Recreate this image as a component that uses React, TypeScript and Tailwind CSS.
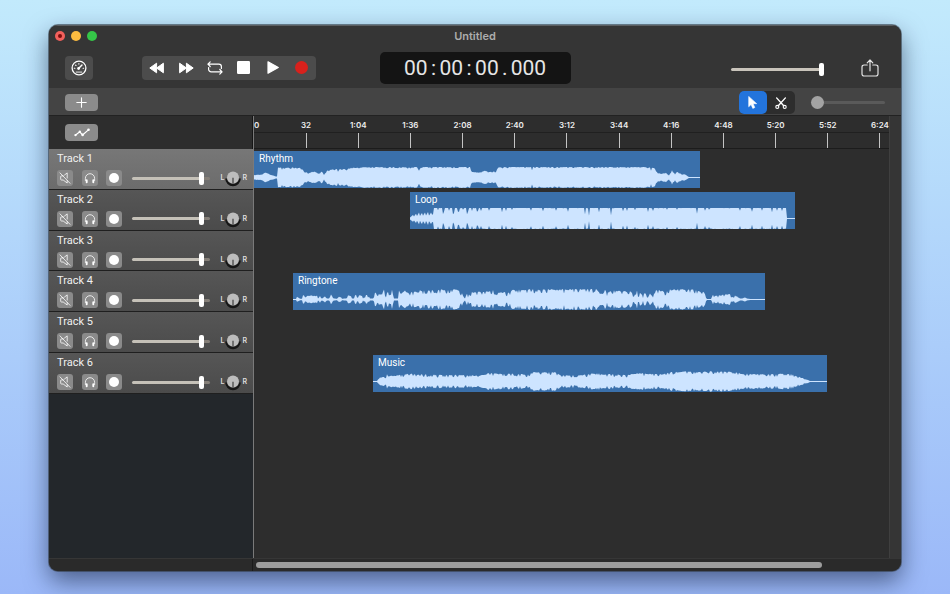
import React, { useState } from "react";
import clsx from "clsx";

/* ---------- data ---------- */

type Key = [x: number, amp: number];

interface Clip {
  name: string;
  start: number;
  length: number;
  jitter: number;
  keys: Key[];
  dips?: Key[];
}

const rhythm: Clip = {
  name: "Rhythm",
  start: 0,
  length: 446,
  jitter: 1.4,
  keys: [
    [0, 2.5], [8, 3], [12, 5.5], [16, 3], [22, 1], [23, 1], [24, 10], [46, 10], [51, 6], [54, 4.5], [59, 6.5], [64, 4.5],
    [68, 6], [70, 3], [73, 7], [79, 8.5], [93, 8.5], [96, 9.8], [116, 10.5], [163, 10.5], [165, 7], [167, 10.6],
    [216, 10.6], [218, 5.5], [226, 5.5], [231, 7], [236, 5.5], [242, 6.5], [244, 10.4], [260, 10.6], [393, 10.6], [401, 9.5],
    [403, 5.5], [407, 3.5], [412, 5], [415, 2], [418, 7.5], [421, 3.5], [423, 6], [428, 3], [431, 3.5], [434, 1], [435, 0.5],
    [446, 0.5],
  ],
  dips: [[28, 1], [37, 1], [66, 1], [84, 2], [88, 1], [278, 3], [305, 1], [397, 2]],
};

const loop: Clip = {
  name: "Loop",
  start: 156,
  length: 385,
  jitter: 0.6,
  keys: [
    [0, 1], [3, 3.5], [4, 2], [6, 5], [7, 2.5], [9, 6], [10, 2.5], [12, 6], [13, 3], [15, 6], [16, 3], [18, 6.5], [19, 3],
    [21, 6], [22, 4], [23, 4], [24, 10.8], [376, 10.8], [377, 0.5], [385, 0.5],
  ],
  dips: [
    [28, 2], [33, 6], [34, 4], [39, 3], [43, 6], [44, 5], [48, 4], [49, 4], [53, 2], [57, 6], [58, 4], [62, 3], [67, 4],
    [68, 3], [71, 3], [79, 3], [92, 4], [96, 3], [102, 2], [121, 3], [133, 3], [146, 3], [158, 4], [175, 6], [179, 8],
    [189, 4], [201, 7], [213, 3], [217, 3], [225, 2], [238, 4], [243, 3], [257, 2], [267, 2], [287, 6], [295, 3],
    [299, 2], [330, 3], [342, 4], [352, 3], [362, 4], [367, 3], [372, 3],
  ],
};

const ringtone: Clip = {
  name: "Ringtone",
  start: 39,
  length: 472,
  jitter: 4.5,
  keys: [
    [0, 0.5], [3, 0.5], [4, 3], [7, 0.8], [9, 0.8], [10, 4.5], [13, 4], [24, 4], [25, 1], [27, 3.5], [29, 1], [31, 4.5],
    [34, 1], [36, 1], [38, 5], [41, 1], [44, 0.8], [47, 4.5], [49, 0.8], [53, 1], [55, 6.5], [57, 6.5], [59, 1], [61, 1],
    [62, 5], [69, 4], [70, 1], [73, 5], [75, 5], [77, 1], [80, 1], [82, 7], [87, 5.5], [89, 5.5], [91, 10.5], [93, 5],
    [95, 9], [97, 5], [99, 10], [101, 1], [105, 1], [106, 10.5], [108, 6], [112, 9], [116, 7], [120, 8.5], [125, 7.5],
    [127, 9.5], [139, 9.5], [145, 10.4], [164, 10.4], [169, 7], [171, 2], [172, 1], [174, 7], [175, 2], [177, 8],
    [182, 7.5], [200, 9.5], [205, 7.5], [217, 7.5], [220, 10.4], [247, 10.4], [270, 10.4], [277, 11], [304, 10.8],
    [307, 7], [310, 6], [312, 10], [314, 7.5], [319, 9.5], [337, 8.5], [342, 6], [344, 10.5], [345, 3], [347, 7.5],
    [350, 4], [352, 7.5], [355, 2], [357, 6.5], [360, 4], [362, 10], [370, 9.5], [372, 7], [377, 10.4], [394, 11],
    [404, 10.2], [407, 8], [409, 6], [411, 10], [413, 3], [414, 0.5], [418, 0.5], [419, 6], [421, 4.5], [427, 4.5],
    [431, 5.5], [435, 6], [440, 4.5], [444, 3.5], [447, 1], [449, 1], [452, 2], [454, 1], [457, 0.6], [472, 0.6],
  ],
};

const music: Clip = {
  name: "Music",
  start: 119,
  length: 454,
  jitter: 3,
  keys: [
    [0, 0.5], [4, 0.5], [6, 4], [13, 5], [14, 8], [15, 5.5], [25, 6.5], [35, 8], [59, 7], [82, 6.8], [102, 6.4], [112, 6.8],
    [115, 9], [125, 8], [135, 8.2], [155, 7.5], [159, 9.5], [182, 9.5], [187, 6.6], [209, 6.6], [225, 9], [230, 7.5],
    [244, 7.5], [254, 6.6], [264, 8.6], [290, 7.6], [297, 9.5], [314, 10.5], [324, 9.5], [337, 10.5], [360, 10],
    [370, 8], [390, 7.6], [419, 8], [424, 5.5], [430, 3.5], [437, 0.6], [454, 0.6],
  ],
};

const tracks: { name: string; clip?: Clip }[] = [
  { name: "Track 1", clip: rhythm },
  { name: "Track 2", clip: loop },
  { name: "Track 3" },
  { name: "Track 4", clip: ringtone },
  { name: "Track 5" },
  { name: "Track 6", clip: music },
];

const marks = ["32", "1:04", "1:36", "2:08", "2:40", "3:12", "3:44", "4:16", "4:48", "5:20", "5:52", "6:24"];

/* ---------- wave form ---------- */

// Integer hash, 0..1.
function noise(n: number) {
  let v = Math.imul(n + 1013, 0x9e3779b1);
  v = Math.imul(v ^ (v >>> 15), 0x85ebca6b);
  v ^= v >>> 13;
  return (v >>> 0) / 4294967296;
}

// Mostly a shallow ripple, with a deep notch every few pixels.
function roughness(x: number) {
  return noise(x) > 0.72 ? 0.6 + noise(x + 311) * 0.4 : noise(x + 97) * 0.35;
}

function wavePath({ length, keys, dips = [], jitter }: Clip) {
  const mid = 10.5;
  const top: string[] = [];
  const bottom: string[] = [];
  let k = 0;
  for (let x = 0; x <= length; x++) {
    while (k < keys.length - 2 && x > keys[k + 1][0]) k++;
    const [x0, a0] = keys[k];
    const [x1, a1] = keys[k + 1];
    let amp = a0 + ((a1 - a0) * (x - x0)) / (x1 - x0);
    if (amp > 2) amp = Math.max(1.5, amp - jitter * roughness(x) * Math.min(1, amp / 7));
    const dip = dips.find(([at]) => at === x);
    if (dip) amp -= dip[1];
    top.push(`${x} ${(mid - amp).toFixed(2)}`);
    bottom.unshift(`${x} ${(mid + amp - (amp > 2 ? noise(x + 900) * 0.4 : 0)).toFixed(2)}`);
  }
  return `M${top.join("L")}L${bottom.join("L")}Z`;
}

function ClipView({ clip }: { clip: Clip }) {
  return (
    <div
      className="flex h-[37px] shrink-0 flex-col justify-between bg-[#3a70ab]"
      style={{ width: clip.length, marginLeft: clip.start }}
    >
      <span className="h-4 px-[5px] font-['Roboto','Inter',sans-serif] text-[10px] leading-4 text-white">{clip.name}</span>
      <svg className="block h-[21px] w-full" viewBox={`0 0 ${clip.length} 21`} preserveAspectRatio="none" aria-hidden="true">
        <path d={wavePath(clip)} fill="#cde4ff" />
      </svg>
    </div>
  );
}

/* ---------- icons ---------- */

type IconProps = { className?: string };

const Gauge = () => (
  <svg className="size-4" viewBox="0 0 16 16" fill="none" stroke="#fff" aria-hidden="true">
    <circle cx="8" cy="8" r="6.9" strokeWidth="1.3" />
    <path d="M7.8 8.3 11 4.9" strokeWidth="1.4" strokeLinecap="round" />
    <circle cx="7.6" cy="8.5" r="1.4" fill="#fff" stroke="none" />
    <path d="M3.3 8.2h.6M4.6 5.1l.4.4M7.9 3.5v.6M12.1 8.2h.5" strokeWidth="1.1" strokeLinecap="round" />
    <path d="M4.8 12.1h6.4" strokeWidth=".9" />
  </svg>
);

const Rewind = ({ className }: IconProps) => (
  <svg className={clsx("h-3 w-4", className)} viewBox="0 0 16 12" fill="#fff" stroke="#fff" strokeWidth="1" strokeLinejoin="round" aria-hidden="true">
    <path d="M7.6 1.2v9.6L.8 6ZM14.4 1.2v9.6L7.6 6Z" />
  </svg>
);

const Repeat = () => (
  <svg className="h-[14px] w-4" viewBox="0 0 16 14" fill="none" stroke="#fff" strokeWidth="1.2" strokeLinecap="round" strokeLinejoin="round" aria-hidden="true">
    <path d="M3.2.9.9 3.2l2.3 2.3M1.2 3.2h10.6a2.6 2.6 0 0 1 2.6 2.6v1.6" />
    <path d="m12.8 8.5 2.3 2.3-2.3 2.3M14.8 10.8H4.2a2.6 2.6 0 0 1-2.6-2.6V6.6" />
  </svg>
);

const Stop = () => (
  <svg className="size-[13px]" viewBox="0 0 13 13" aria-hidden="true">
    <rect width="13" height="13" rx="1.2" fill="#fff" />
  </svg>
);

const Play = () => (
  <svg className="h-[13px] w-3" viewBox="0 0 12 13" fill="#fff" stroke="#fff" strokeWidth="1.2" strokeLinejoin="round" aria-hidden="true">
    <path d="M1 .8v11.4L11.3 6.5Z" />
  </svg>
);

const Share = () => (
  <svg className="h-[18px] w-[18px]" viewBox="0 0 18 18" fill="none" stroke="#e4e4e4" strokeWidth="1.2" strokeLinecap="round" strokeLinejoin="round" aria-hidden="true">
    <path d="M6.2 6H3.1A2 2 0 0 0 1 8v7a2 2 0 0 0 2.1 2h11.8a2 2 0 0 0 2.1-2V8a2 2 0 0 0-2.1-2h-3.1" />
    <path d="M9 11.8V1.2M6.2 3.8 9 1l2.8 2.8" />
  </svg>
);

const Plus = () => (
  <svg className="size-[11px]" viewBox="0 0 11 11" stroke="#fff" strokeWidth="1.1" strokeLinecap="round" aria-hidden="true">
    <path d="M5.5.8v9.4M.8 5.5h9.4" />
  </svg>
);

const Automation = () => (
  <svg className="h-[9px] w-4" viewBox="0 0 16 9" fill="none" stroke="#fff" strokeWidth="1.2" strokeLinejoin="round" aria-hidden="true">
    <path d="M1.3 7.2 5.8 3.8 8.6 7 14.7 1.6" />
    <g fill="#fff" stroke="none">
      <circle cx="1.5" cy="7.1" r="1.2" />
      <circle cx="5.8" cy="3.8" r="1.2" />
      <circle cx="8.6" cy="6.9" r="1.3" />
      <circle cx="14.5" cy="1.7" r="1.3" />
    </g>
  </svg>
);

const Pointer = () => (
  <svg className="h-[13px] w-[10px]" viewBox="0 0 10 13" aria-hidden="true">
    <path d="M.7.4v10.4l2.4-2.3 1.7 3.9 2-.9-1.7-3.8h3.6Z" fill="#fff" stroke="#fff" strokeWidth=".6" strokeLinejoin="round" />
  </svg>
);

const Cut = () => (
  <svg className="size-3" viewBox="0 0 12 12" fill="none" stroke="#fff" strokeLinecap="round" aria-hidden="true">
    <path d="M1.6.9 8.7 8.7M10.4.9 3.3 8.7" strokeWidth="1.4" />
    <circle cx="2.3" cy="9.9" r="1.5" strokeWidth="1.1" />
    <circle cx="9.7" cy="9.9" r="1.5" strokeWidth="1.1" />
  </svg>
);

const Muted = () => (
  <svg className="size-3" viewBox="0 0 12 12" fill="none" stroke="#fff" strokeWidth=".8" strokeLinecap="round" strokeLinejoin="round" aria-hidden="true">
    <path d="M4.3 3.9H2.4a.7.7 0 0 0-.7.7v2.7c0 .4.3.7.7.7h1.8l4 3V8.6M5.5 3 8.2.9v5.2M1 .9l10 10.4" />
  </svg>
);

const Headphones = () => (
  <svg className="size-3" viewBox="0 0 12 12" fill="none" stroke="#fff" strokeLinecap="round" aria-hidden="true">
    <path d="M1.4 8.6V6.3a4.6 4.6 0 0 1 9.2 0v2.3" strokeWidth=".8" />
    <path d="M2.7 8.2v2M9.3 8.2v2" strokeWidth="1.9" />
  </svg>
);

/* ---------- controls ---------- */

const rangeBase = "m-0 block h-[13px] cursor-pointer appearance-none bg-transparent outline-none";
const barTrack = "[&::-webkit-slider-runnable-track]:h-[3px] [&::-webkit-slider-runnable-track]:rounded-full";
const barThumb =
  "[&::-webkit-slider-thumb]:-mt-[5px] [&::-webkit-slider-thumb]:h-[13px] [&::-webkit-slider-thumb]:w-[5px] [&::-webkit-slider-thumb]:appearance-none [&::-webkit-slider-thumb]:rounded-[2px] [&::-webkit-slider-thumb]:bg-white";

function Pan({ track }: { track: string }) {
  return (
    <div className="flex items-center text-[7px] leading-4 font-semibold text-[#dedede]">
      <span>L</span>
      <label className="relative block size-[18px]">
        <svg className="block size-[18px]" viewBox="0 0 18 18" aria-hidden="true">
          <path d="M2.3 9.4a6.7 6.7 0 0 0 13.4 0" fill="none" stroke="#161616" strokeWidth="2.2" />
          <circle cx="9" cy="8.4" r="6" fill="#bdbdbd" />
          <path d="M9 8.8v5.8" stroke="#333" strokeWidth="1.1" />
        </svg>
        <input
          type="range"
          min={-50}
          max={50}
          defaultValue={0}
          aria-label={`${track} pan`}
          className="absolute inset-0 m-0 size-full cursor-pointer opacity-0"
        />
      </label>
      <span>R</span>
    </div>
  );
}

const trackButton = "flex size-4 items-center justify-center rounded-[3px] bg-[#8a8a8a]";

function TrackHeader({ name, selected, onSelect }: { name: string; selected: boolean; onSelect: () => void }) {
  return (
    <li
      onClick={onSelect}
      className={clsx(
        "flex flex-col border-b border-[#1f1f1f] bg-linear-to-b pr-[6px] pl-2",
        selected ? "from-[#777777] to-[#6c6c6c]" : "from-[#565656] to-[#4b4b4b]",
      )}
    >
      <span className="pt-px font-['Roboto','Inter',sans-serif] text-[11px] leading-[18px] text-[#f0f0f0]">{name}</span>
      <div className="flex items-center justify-between pt-px">
        <div className="flex w-[65px] items-center justify-between">
          <button type="button" aria-label={`Mute ${name}`} className={trackButton}>
            <Muted />
          </button>
          <button type="button" aria-label={`Solo ${name}`} className={trackButton}>
            <Headphones />
          </button>
          <button type="button" aria-label={`Arm ${name}`} className={trackButton}>
            <span className="size-[10px] rounded-full bg-white" />
          </button>
        </div>
        <input
          type="range"
          defaultValue={92}
          aria-label={`${name} volume`}
          className={clsx(
            rangeBase,
            barTrack,
            barThumb,
            "w-[78px] [&::-webkit-slider-runnable-track]:bg-[linear-gradient(90deg,#c5c1b8_88%,#857f78_88%)]",
          )}
        />
        <Pan track={name} />
      </div>
    </li>
  );
}

/* ---------- page ---------- */

export default function App() {
  const [selected, setSelected] = useState(0);
  const [tool, setTool] = useState("select");

  const transport = [
    { label: "Rewind", icon: <Rewind /> },
    { label: "Fast forward", icon: <Rewind className="rotate-180" /> },
    { label: "Loop", icon: <Repeat /> },
    { label: "Stop", icon: <Stop /> },
    { label: "Play", icon: <Play /> },
    { label: "Record", icon: <span className="size-[13px] rounded-full bg-[#d8211c]" /> },
  ];

  return (
    <div className="flex h-screen bg-linear-to-b from-[#c2eafc] to-[#9bb8f8] px-[49px] pt-[25px] pb-[23px] font-['Inter','Liberation_Sans',sans-serif]">
      <main className="flex min-w-0 flex-1 flex-col overflow-hidden rounded-[9px] bg-[#2d2d2d] shadow-[0_0_0_1px_rgba(50,60,70,0.6),0_10px_24px_rgba(10,20,50,0.55)]">
        <header className="shrink-0 bg-[#353535] shadow-[inset_0_1px_0_#5c6063]">
          <div className="grid h-[22px] grid-cols-[1fr_auto_1fr] items-center px-[6px]">
            <div className="flex gap-[6px]">
              <button type="button" aria-label="Close" className="flex size-[10px] items-center justify-center rounded-full bg-[#f2605c]">
                <span className="size-1 rounded-full bg-[#7c0b0b]" />
              </button>
              <button type="button" aria-label="Minimize" className="size-[10px] rounded-full bg-[#fcbb40]" />
              <button type="button" aria-label="Zoom" className="size-[10px] rounded-full bg-[#35c648]" />
            </div>
            <h1 className="text-[11px] leading-4 font-semibold text-[#adadad]">Untitled</h1>
          </div>

          <div className="grid h-[41px] grid-cols-[1fr_auto_1fr] items-center px-4">
            <div className="flex items-center gap-[49px]">
              <button type="button" aria-label="Performance" className="flex h-6 w-7 items-center justify-center rounded-[4px] bg-[#4c4c4c]">
                <Gauge />
              </button>
              <div className="flex h-6 rounded-[4px] bg-[#4c4c4c]">
                {transport.map(({ label, icon }) => (
                  <button key={label} type="button" aria-label={label} className="flex w-[29px] items-center justify-center">
                    {icon}
                  </button>
                ))}
              </div>
            </div>

            <div className="flex h-8 w-[191px] items-center justify-center rounded-[5px] bg-[#141414] font-['Roboto','Inter',sans-serif] text-[21px] leading-8 text-[#e6e6e6]">
              <span>00</span>
              <span className="w-3 text-center">:</span>
              <span>00</span>
              <span className="w-3 text-center">:</span>
              <span>00</span>
              <span className="w-3 text-center">.</span>
              <span>000</span>
            </div>

            <div className="flex items-end justify-end gap-[37px] pr-[6px]">
              <input
                type="range"
                defaultValue={100}
                aria-label="Master volume"
                className={clsx(rangeBase, barTrack, barThumb, "mb-px w-[93px] [&::-webkit-slider-runnable-track]:bg-[#c9c4bb]")}
              />
              <button type="button" aria-label="Share">
                <Share />
              </button>
            </div>
          </div>
        </header>

        <div className="flex h-7 shrink-0 items-center justify-between border-b border-[#222222] bg-[#444444] px-4 pt-[2px]">
          <button type="button" aria-label="Add track" className="flex h-[17px] w-[33px] items-center justify-center rounded-[4px] bg-[#8b8b8b]">
            <Plus />
          </button>
          <div className="flex items-center gap-4">
            <div className="flex h-[23px] rounded-[5px] bg-[#2d2d2d]">
              <button
                type="button"
                aria-label="Select tool"
                onClick={() => setTool("select")}
                className={clsx("flex w-7 items-center justify-center rounded-[5px]", tool === "select" && "bg-[#2374dc]")}
              >
                <Pointer />
              </button>
              <button
                type="button"
                aria-label="Cut tool"
                onClick={() => setTool("cut")}
                className={clsx("flex w-7 items-center justify-center rounded-[5px]", tool === "cut" && "bg-[#2374dc]")}
              >
                <Cut />
              </button>
            </div>
            <input
              type="range"
              defaultValue={0}
              aria-label="Timeline zoom"
              className={clsx(
                rangeBase,
                barTrack,
                "w-[74px] [&::-webkit-slider-runnable-track]:bg-[#5a5a5a] [&::-webkit-slider-thumb]:-mt-[5px] [&::-webkit-slider-thumb]:size-[13px] [&::-webkit-slider-thumb]:appearance-none [&::-webkit-slider-thumb]:rounded-full [&::-webkit-slider-thumb]:bg-[#a3a3a3]",
              )}
            />
          </div>
        </div>

        <div className="flex min-h-0 flex-1">
          <aside className="flex w-[204px] shrink-0 flex-col bg-[#23272b]">
            <div className="flex h-[33px] shrink-0 items-center border-r border-[#161616] bg-[#2d2d2d] px-4">
              <button type="button" aria-label="Automation" className="flex h-[17px] w-[33px] items-center justify-center rounded-[4px] bg-[#8b8b8b]">
                <Automation />
              </button>
            </div>
            <ul className="grid h-[245px] shrink-0 grid-rows-6">
              {tracks.map((track, i) => (
                <TrackHeader key={track.name} name={track.name} selected={selected === i} onSelect={() => setSelected(i)} />
              ))}
            </ul>
          </aside>

          <section className="flex min-w-0 flex-1 flex-col overflow-hidden border-l border-[#7a7a7a]">
            <div className="flex h-[33px] shrink-0 border-b border-[#1c1c1c] text-[8px] font-semibold text-[#ededed]">
              <div className="h-[17px] w-[26px] shrink-0 border-b border-[#202020] leading-[18px]">0</div>
              <ol className="grid w-[626px] shrink-0 grid-cols-12">
                {marks.map((mark) => (
                  <li key={mark} className="flex flex-col items-center">
                    <span className="h-[17px] w-full border-b border-[#202020] text-center leading-[18px]">{mark}</span>
                    <span className="w-px flex-1 bg-[#c4c4c4]" />
                  </li>
                ))}
              </ol>
            </div>
            <div className="grid h-[245px] shrink-0 grid-rows-6">
              {tracks.map(({ name, clip }) => (
                <div key={name} className="flex pt-[2px]">
                  {clip && <ClipView clip={clip} />}
                </div>
              ))}
            </div>
          </section>

          <div className="w-3 shrink-0 border-l border-[#3f3f3f] bg-[#353535]" />
        </div>

        <footer className="flex h-[13px] shrink-0 items-center border-t border-[#363636] bg-[#2a2a2a]">
          <div className="h-full w-[204px] shrink-0 border-r border-[#1a1a1a]" />
          <div className="flex-1 pr-[79px] pl-[3px]">
            <div className="h-[6px] rounded-full bg-[#9d9d9d]" />
          </div>
        </footer>
      </main>
    </div>
  );
}
